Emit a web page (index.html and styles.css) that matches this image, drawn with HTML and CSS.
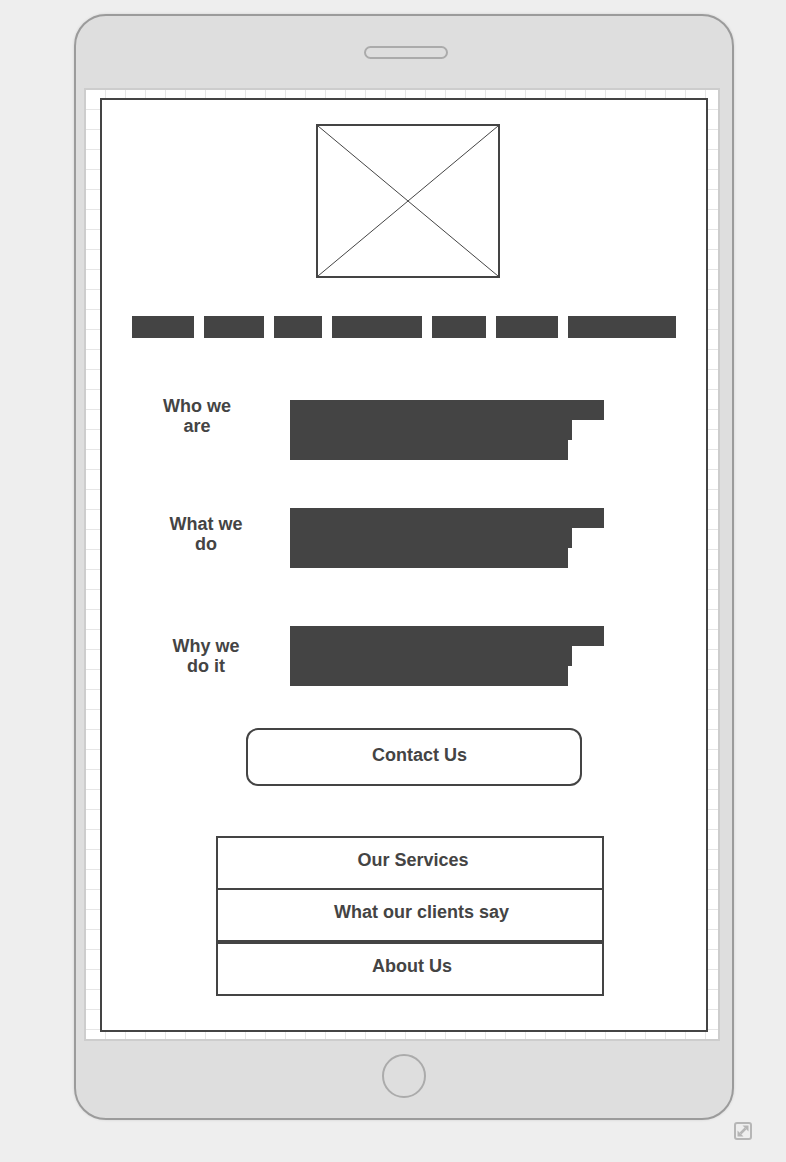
FILE: index.html
```html
<!DOCTYPE html>
<html lang="en">
<head>
<meta charset="utf-8">
<title>Tablet wireframe</title>
<link rel="stylesheet" href="styles.css">
</head>
<body>
<div class="device">
  <div class="speaker"></div>
  <div class="screen">
    <div class="frame">
      <div class="image-ph">
        <svg class="image-x" viewBox="0 0 100 100" preserveAspectRatio="none">
          <line x1="0" y1="0" x2="100" y2="100" vector-effect="non-scaling-stroke"/>
          <line x1="100" y1="0" x2="0" y2="100" vector-effect="non-scaling-stroke"/>
        </svg>
      </div>
      <nav class="menu">
        <span class="menu-item"></span>
        <span class="menu-item"></span>
        <span class="menu-item"></span>
        <span class="menu-item"></span>
        <span class="menu-item"></span>
        <span class="menu-item"></span>
        <span class="menu-item"></span>
      </nav>
      <section class="row row-who">
        <h2 class="label">Who we<br>are</h2>
        <div class="text-block"><span class="line line-a"></span><span class="line line-b"></span><span class="line line-c"></span></div>
      </section>
      <section class="row row-what">
        <h2 class="label">What we<br>do</h2>
        <div class="text-block"><span class="line line-a"></span><span class="line line-b"></span><span class="line line-c"></span></div>
      </section>
      <section class="row row-why">
        <h2 class="label">Why we<br>do it</h2>
        <div class="text-block"><span class="line line-a"></span><span class="line line-b"></span><span class="line line-c"></span></div>
      </section>
      <a class="btn">Contact Us</a>
      <ul class="list">
        <li class="list-item item-services">Our Services</li>
        <li class="list-item item-clients">What our clients say</li>
        <li class="list-item item-about">About Us</li>
      </ul>
    </div>
  </div>
  <div class="home"></div>
</div>
<div class="resize">
  <svg width="18" height="18" viewBox="0 0 18 18">
    <rect x="1" y="1" width="16" height="16" rx="2" fill="none" stroke="#b6b6b6" stroke-width="2"/>
    <line x1="6.5" y1="11.5" x2="11.5" y2="6.5" stroke="#b6b6b6" stroke-width="2.5"/>
    <polygon points="14.5,3.5 8.5,3.5 14.5,9.5" fill="#b6b6b6"/>
    <polygon points="3.5,14.5 3.5,8.5 9.5,14.5" fill="#b6b6b6"/>
  </svg>
</div>
</body>
</html>
```
FILE: styles.css
```css
* { box-sizing: border-box; }

html, body {
  margin: 0;
  padding: 0;
  background: #eeeeee;
  font-family: "Liberation Sans", Arial, Helvetica, sans-serif;
  color: #444444;
}

body {
  padding: 14px 0 0 74px;
  width: 786px;
  height: 1162px;
  overflow: hidden;
}

.device {
  width: 660px;
  height: 1106px;
  background: #dedede;
  border: 2px solid #9b9b9b;
  border-radius: 32px;
  box-shadow: 0 0 3px rgba(0, 0, 0, 0.12);
  padding-left: 8px;
  display: flex;
  flex-direction: column;
  align-items: flex-start;
}

.speaker {
  margin-top: 30px;
  margin-left: 280px;
  width: 84px;
  height: 13px;
  border: 2px solid #ababab;
  border-radius: 7px;
}

.screen {
  margin-top: 29px;
  width: 636px;
  height: 953px;
  border: 2px solid #cdcdcd;
  background-color: #ffffff;
  background-image:
    linear-gradient(to right, #e6e6e6 1px, transparent 1px),
    linear-gradient(to bottom, #e6e6e6 1px, transparent 1px);
  background-size: 20px 20px;
  background-position: 19px 19px;
  padding: 8px 0 0 14px;
}

.frame {
  width: 608px;
  height: 934px;
  border: 2px solid #444444;
  background: #ffffff;
  display: flex;
  flex-direction: column;
  align-items: flex-start;
}

.image-ph {
  margin-top: 24px;
  margin-left: 214px;
  width: 184px;
  height: 154px;
  border: 2px solid #444444;
}

.image-x {
  display: block;
  width: 100%;
  height: 100%;
}

.image-x line {
  stroke: #444444;
  stroke-width: 1;
}

.menu {
  margin-top: 38px;
  margin-left: 30px;
  display: flex;
  gap: 10px;
  height: 22px;
}

.menu-item {
  display: block;
  height: 22px;
  background: #444444;
}

.menu-item:nth-child(1) { width: 62px; }
.menu-item:nth-child(2) { width: 60px; }
.menu-item:nth-child(3) { width: 48px; }
.menu-item:nth-child(4) { width: 90px; }
.menu-item:nth-child(5) { width: 54px; }
.menu-item:nth-child(6) { width: 62px; }
.menu-item:nth-child(7) { width: 108px; }

.row {
  display: grid;
  grid-template-columns: 188px 314px;
  align-items: start;
}

.label {
  margin: 0;
  font-size: 18px;
  line-height: 20px;
  font-weight: bold;
  text-align: center;
}

.text-block {
  display: flex;
  flex-direction: column;
}

.line {
  display: block;
  height: 20px;
  background: #444444;
}

.line-a { width: 314px; }
.line-b { width: 282px; }
.line-c { width: 278px; }

.row-who { margin-top: 58px; }
.row-who .label { margin-top: 0; padding-left: 2px; }
.row-who .text-block { margin-top: 4px; }

.row-what { margin-top: 48px; }
.row-what .label { margin-top: 6px; padding-left: 20px; }

.row-why { margin-top: 58px; }
.row-why .label { margin-top: 10px; padding-left: 20px; }

.btn {
  margin-top: 42px;
  margin-left: 144px;
  width: 336px;
  height: 58px;
  border: 2px solid #444444;
  border-radius: 12px;
  display: flex;
  align-items: center;
  justify-content: center;
  padding: 0 0 4px 11px;
  font-size: 18px;
  line-height: 20px;
  font-weight: bold;
  color: #444444;
  text-decoration: none;
}

.list {
  margin: 50px 0 0 114px;
  padding: 0;
  list-style: none;
  width: 388px;
}

.list-item {
  height: 54px;
  border: 2px solid #444444;
  display: flex;
  align-items: center;
  justify-content: center;
  padding-bottom: 6px;
  font-size: 18px;
  line-height: 20px;
  font-weight: bold;
}

.item-services { padding-left: 6px; }
.item-clients { margin-top: -2px; padding-left: 23px; }
.item-about { padding-left: 4px; }

.home {
  margin-top: 13px;
  margin-left: 298px;
  width: 44px;
  height: 44px;
  border: 2px solid #ababab;
  border-radius: 50%;
}

.resize {
  margin-top: 2px;
  margin-left: 660px;
  width: 18px;
  height: 18px;
}

.resize svg { display: block; }
```
